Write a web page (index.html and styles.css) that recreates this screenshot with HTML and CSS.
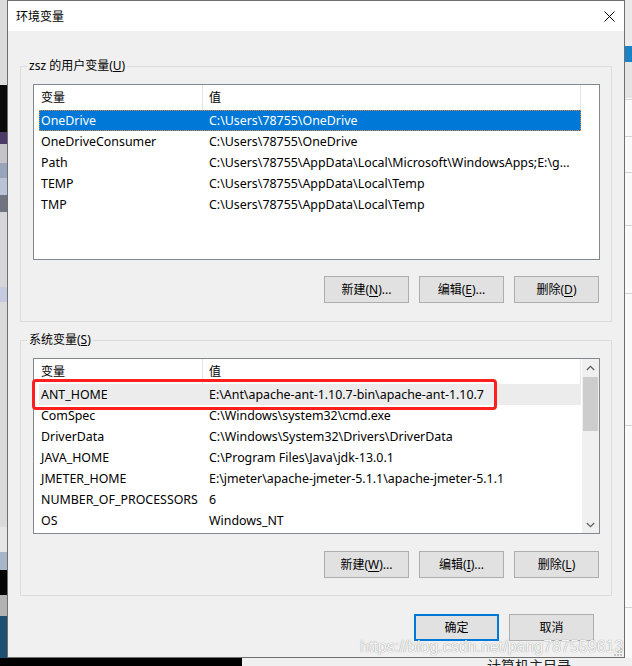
FILE: index.html
```html
<!DOCTYPE html>
<html lang="zh-CN">
<head>
<meta charset="utf-8">
<title>环境变量</title>
<link rel="stylesheet" href="styles.css">
</head>
<body>
<div class="dialog">
  <div class="titlebar">
    <span class="title">环境变量</span>
    <svg class="close" width="11" height="11" viewBox="0 0 11 11"><path d="M0.5 0.5L10.5 10.5M10.5 0.5L0.5 10.5" stroke="#000" stroke-width="1" fill="none"/></svg>
  </div>
  <div class="content">
    <fieldset class="group group-user">
      <legend>zsz 的用户变量(<u>U</u>)</legend>
      <div class="group-body">
        <div class="list">
          <div class="list-main">
            <div class="list-head"><span class="hc hc1">变量</span><span class="hc hc2">值</span></div>
            <div class="row selected"><span class="c1">OneDrive</span><span class="c2">C:\Users\78755\OneDrive</span></div>
            <div class="row"><span class="c1">OneDriveConsumer</span><span class="c2">C:\Users\78755\OneDrive</span></div>
            <div class="row"><span class="c1">Path</span><span class="c2">C:\Users\78755\AppData\Local\Microsoft\WindowsApps;E:\g...</span></div>
            <div class="row"><span class="c1">TEMP</span><span class="c2">C:\Users\78755\AppData\Local\Temp</span></div>
            <div class="row"><span class="c1">TMP</span><span class="c2">C:\Users\78755\AppData\Local\Temp</span></div>
          </div>
        </div>
        <div class="actions">
          <button class="btn">新建(<u>N</u>)...</button>
          <button class="btn">编辑(<u>E</u>)...</button>
          <button class="btn">删除(<u>D</u>)</button>
        </div>
      </div>
    </fieldset>
    <fieldset class="group group-sys">
      <legend>系统变量(<u>S</u>)</legend>
      <div class="group-body">
        <div class="list">
          <div class="list-main">
            <div class="list-head"><span class="hc hc1">变量</span><span class="hc hc2">值</span></div>
            <div class="row hilite"><span class="c1">ANT_HOME</span><span class="c2">E:\Ant\apache-ant-1.10.7-bin\apache-ant-1.10.7</span></div>
            <div class="row"><span class="c1">ComSpec</span><span class="c2">C:\Windows\system32\cmd.exe</span></div>
            <div class="row"><span class="c1">DriverData</span><span class="c2">C:\Windows\System32\Drivers\DriverData</span></div>
            <div class="row"><span class="c1">JAVA_HOME</span><span class="c2">C:\Program Files\Java\jdk-13.0.1</span></div>
            <div class="row"><span class="c1">JMETER_HOME</span><span class="c2">E:\jmeter\apache-jmeter-5.1.1\apache-jmeter-5.1.1</span></div>
            <div class="row"><span class="c1">NUMBER_OF_PROCESSORS</span><span class="c2">6</span></div>
            <div class="row"><span class="c1">OS</span><span class="c2">Windows_NT</span></div>
          </div>
          <div class="scrollbar">
            <div class="sb-btn"><svg width="9" height="6" viewBox="0 0 9 6"><path d="M0.8 5L4.5 1.3L8.2 5" stroke="#606060" stroke-width="1.3" fill="none"/></svg></div>
            <div class="sb-thumb"></div>
            <div class="sb-track"></div>
            <div class="sb-btn"><svg width="9" height="6" viewBox="0 0 9 6"><path d="M0.8 1L4.5 4.7L8.2 1" stroke="#606060" stroke-width="1.3" fill="none"/></svg></div>
          </div>
          <div class="annot"></div>
        </div>
        <div class="actions">
          <button class="btn">新建(<u>W</u>)...</button>
          <button class="btn">编辑(<u>I</u>)...</button>
          <button class="btn">删除(<u>L</u>)</button>
        </div>
      </div>
    </fieldset>
    <div class="footer">
      <button class="btn btn-default">确定</button>
      <button class="btn">取消</button>
    </div>
  </div>
  <div class="watermark">https://blog.csdn.net/pang787559613</div>
  <svg class="grip" width="9" height="9" viewBox="0 0 9 9">
    <rect x="7" y="1" width="2" height="2" fill="#c4c4c4"/>
    <rect x="4" y="4" width="2" height="2" fill="#c4c4c4"/>
    <rect x="7" y="4" width="2" height="2" fill="#c4c4c4"/>
    <rect x="1" y="7" width="2" height="2" fill="#c4c4c4"/>
    <rect x="4" y="7" width="2" height="2" fill="#c4c4c4"/>
    <rect x="7" y="7" width="2" height="2" fill="#c4c4c4"/>
  </svg>
</div>
<div class="taskstrip">
  <div class="strip-dark"></div>
  <div class="strip-light"><span>计算机主目录</span></div>
</div>
</body>
</html>
```

FILE: styles.css
```css
html, body {
  margin: 0;
  padding: 0;
}
body {
  width: 632px;
  height: 666px;
  overflow: hidden;
  font-family: "Noto Sans", "Noto Sans CJK SC", sans-serif;
  font-size: 12px;
  color: #000;
  background:
    linear-gradient(to bottom,
      #dcdcdc 0 85px, #0a0a0a 85px 132px, #4a3a68 132px 144px,
      #c4c4c8 144px 163px, #98a4ba 163px 178px, #b9c4d8 178px 195px,
      #6f7480 195px 212px, #d6d6da 212px 287px, #c6cadf 287px 302px,
      #dadada 302px 527px, #e6e6e6 527px 552px, #a7b7c7 552px 570px,
      #050505 570px 595px, #b2b2b2 595px 616px, #1f4f70 616px 666px) left top / 7px 100% no-repeat,
    linear-gradient(to bottom,
      #ebebeb 0 46px, #1a82c6 46px 62px, #e4e4e4 62px 98px,
      #fafafa 98px 99px, #d4d4d4 99px 100px, #fafafa 100px 136px,
      #d4d4d4 136px 137px, #fafafa 137px 172px, #d4d4d4 172px 173px,
      #fafafa 173px 225px, #d4d4d4 225px 226px, #fafafa 226px 293px,
      #d4d4d4 293px 294px, #fafafa 294px 425px, #d4d4d4 425px 426px,
      #fafafa 426px 607px, #d4d4d4 607px 608px, #fafafa 608px) right top / 7px 100% no-repeat,
    #f0f0f0;
}

.dialog {
  position: relative;
  margin-left: 7px;
  width: 618px;
  height: 658px;
  box-sizing: border-box;
  border: 1px solid #6f6f6f;
  background: #f0f0f0;
  display: flex;
  flex-direction: column;
}

.titlebar {
  flex: none;
  height: 30px;
  background: #fff;
  display: flex;
  align-items: center;
  justify-content: space-between;
  padding: 0 9px 0 8px;
}
.title {
  font-family: "Noto Sans CJK SC", sans-serif;
  font-size: 12px;
  line-height: 16px;
}
.close {
  display: block;
}

.content {
  padding: 0 12px;
}

.group {
  margin: 27px 0 0;
  padding: 0;
  border: 1px solid #dcdcdc;
  min-width: 0;
}
.group-sys {
  margin-top: 10px;
}
.group legend {
  margin-left: 6px;
  padding: 0 2px;
  line-height: 16px;
}
.group-body {
  padding: 10px 11px 18px 12px;
}
.group-sys .group-body {
  padding-bottom: 17px;
}

.list {
  position: relative;
  height: 176px;
  box-sizing: border-box;
  border: 1px solid #828790;
  background: #fff;
  display: flex;
}
.list-main {
  flex: 1;
  min-width: 0;
  overflow: hidden;
}
.list-head {
  display: grid;
  grid-template-columns: 169px 378px;
  height: 25px;
  line-height: 25px;
}
.hc {
  box-sizing: border-box;
  border-right: 1px solid #e5e5e5;
}
.hc1 { padding-left: 7px; }
.hc2 { padding-left: 6px; }

.row {
  display: grid;
  grid-template-columns: 164px 378px;
  margin-left: 5px;
  width: 542px;
  height: 21px;
  line-height: 21px;
  font-size: 12.4px;
  white-space: nowrap;
}
.row span {
  overflow: hidden;
}
.c1 { padding-left: 2px; }
.c2 { padding-left: 6px; }
.row.selected {
  background: #0078d7;
  color: #fff;
  outline: 1px dotted #e8893a;
  outline-offset: -1px;
}
.row.hilite {
  background: #ececec;
}

.scrollbar {
  flex: none;
  width: 17px;
  background: #f0f0f0;
  display: flex;
  flex-direction: column;
  align-items: center;
}
.sb-btn {
  width: 17px;
  height: 17px;
  display: flex;
  align-items: center;
  justify-content: center;
}
.sb-thumb {
  margin-top: 1px;
  width: 15px;
  height: 54px;
  background: #cdcdcd;
}
.sb-track {
  flex: 1;
}

.annot {
  position: absolute;
  left: -2px;
  top: 20px;
  width: 465px;
  height: 31px;
  box-sizing: border-box;
  border: 3px solid #ff1f1f;
  border-radius: 4px;
  pointer-events: none;
}

.actions {
  display: flex;
  justify-content: flex-end;
  gap: 10px;
  margin-top: 16px;
  padding-right: 1px;
}
.group-sys .actions {
  margin-top: 17px;
}

.btn {
  width: 85px;
  height: 27px;
  box-sizing: border-box;
  border: 1px solid #adadad;
  background: #e1e1e1;
  font: inherit;
  font-size: 12px;
  color: #000;
  padding: 0;
  margin: 0;
  line-height: 16px;
}
.btn u {
  text-underline-offset: 2px;
}
.btn-default {
  border: 2px solid #0078d7;
}

.footer {
  display: flex;
  justify-content: flex-end;
  gap: 10px;
  margin: 18px 18px 0 0;
}

.watermark {
  position: absolute;
  left: 352px;
  top: 637px;
  font-family: "Liberation Sans", Arial, sans-serif;
  font-size: 16px;
  line-height: 18px;
  white-space: nowrap;
  color: rgba(255, 255, 255, 0.95);
  text-shadow: 0 0 1px rgba(0, 0, 0, 0.4), 0 0 1px rgba(0, 0, 0, 0.15);
  pointer-events: none;
}
.grip {
  position: absolute;
  right: 2px;
  bottom: 1px;
}

.taskstrip {
  display: grid;
  grid-template-columns: 242px 1fr;
  height: 8px;
  overflow: hidden;
}
.strip-dark {
  background: #000;
}
.strip-light {
  background: #f0f0f0;
  padding-left: 245px;
  font-family: "Noto Sans CJK SC", sans-serif;
  font-size: 14px;
  line-height: 14px;
  color: #222;
}
```
